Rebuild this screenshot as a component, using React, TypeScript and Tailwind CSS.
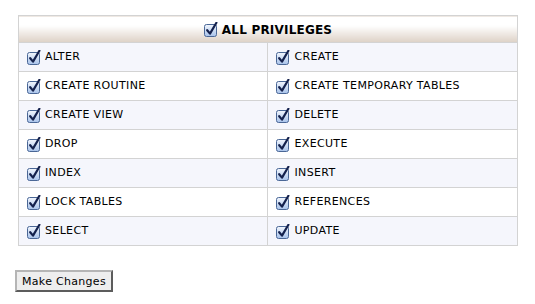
import React from "react";

const privileges = [
  ["ALTER", "CREATE"],
  ["CREATE ROUTINE", "CREATE TEMPORARY TABLES"],
  ["CREATE VIEW", "DELETE"],
  ["DROP", "EXECUTE"],
  ["INDEX", "INSERT"],
  ["LOCK TABLES", "REFERENCES"],
  ["SELECT", "UPDATE"],
];

function CheckBox() {
  return (
    <svg width="14" height="15" viewBox="0 0 14 15" className="shrink-0">
      <defs>
        <linearGradient id="cbfill" x1="0" y1="0" x2="0" y2="1">
          <stop offset="0" stopColor="#f2f6fd" />
          <stop offset="1" stopColor="#a7c2ea" />
        </linearGradient>
      </defs>
      <rect x="0.5" y="2.5" width="12" height="12" rx="2" fill="url(#cbfill)" stroke="#4a6796" />
      <path d="M3.2 8.2 L6 11.6 L12.4 0.8" fill="none" stroke="#14214d" strokeWidth="2.2" strokeLinecap="round" strokeLinejoin="round" />
    </svg>
  );
}

export default function App() {
  return (
    <div className="w-[535px] h-[304px] bg-white pt-[15px] pl-[18px]" style={{ fontFamily: '"DejaVu Sans", Verdana, sans-serif' }}>
      <table className="w-[500px] border-collapse text-[11px] text-black">
        <thead>
          <tr>
            <th colSpan={2} className="h-[27px] border border-[#d3d3d3] bg-gradient-to-b from-white from-35% to-[#ddd1c6] p-0">
              <div className="flex items-center justify-center gap-[4px] text-[12px] font-bold pt-[1px] tracking-[0.2px]">
                <CheckBox />
                <span>ALL PRIVILEGES</span>
              </div>
            </th>
          </tr>
        </thead>
        <tbody>
          {privileges.map((row, i) => (
            <tr key={i} className={i % 2 === 0 ? "bg-[#f5f6fc]" : "bg-white"}>
              {row.map((name) => (
                <td key={name} className="h-[29px] w-[250px] border border-[#d3d3d3] p-0 pl-[8px]">
                  <div className="flex items-center gap-[4px]">
                    <CheckBox />
                    <span className="pt-[1px] tracking-[0.35px]">{name}</span>
                  </div>
                </td>
              ))}
            </tr>
          ))}
        </tbody>
      </table>
      <button className="mt-[24px] -ml-[3px] h-[22px] w-[98px] bg-[#eeeeee] border-2 border-t-[#b5b5b5] border-l-[#b5b5b5] border-b-[#5c5c5c] border-r-[#5c5c5c] text-[11px] text-black leading-none tracking-[0.3px]">
        Make Changes
      </button>
    </div>
  );
}
